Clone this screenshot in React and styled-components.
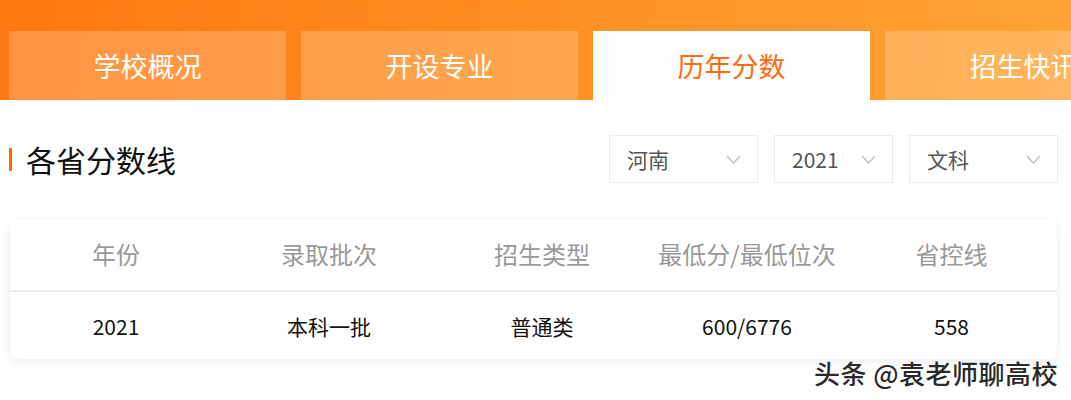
import React from 'react';
import styled, { createGlobalStyle } from 'styled-components';

const GlobalStyle = createGlobalStyle`
    body {
        margin: 0;
        background: #fff;
        font-family: "Noto Sans CJK SC", "Noto Sans", sans-serif;
    }
`;

const Page = styled.div`
    width: 1071px;
    height: 400px;
    overflow: hidden;
    background: #fff;
`;

const Header = styled.div`
    height: 100px;
    box-sizing: border-box;
    padding: 31px 0 0 9px;
    display: flex;
    gap: 15px;
    background: linear-gradient(100deg, #ff7812 0%, #ff8f22 50%, #ffa436 100%);
    overflow: hidden;
`;

const Tab = styled.div`
    flex: 0 0 277px;
    height: 69px;
    display: flex;
    align-items: center;
    justify-content: center;
    font-size: 27px;
    white-space: nowrap;
    color: ${p => (p.active ? '#ff6a10' : '#fff')};
    background: ${p => (p.active ? '#fff' : 'rgba(255,255,255,0.2)')};
`;

const TitleRow = styled.div`
    display: flex;
    align-items: center;
    justify-content: space-between;
    padding: 35px 13px 0 9px;
    height: 48px;
`;

const Title = styled.div`
    display: flex;
    align-items: center;
    gap: 14px;
    font-size: 30px;
    color: #111;
`;

const Bar = styled.span`
    width: 3px;
    height: 23px;
    background: #ff6a10;
`;

const Selects = styled.div`
    display: flex;
    gap: 16px;
`;

const Select = styled.div`
    width: ${p => p.w}px;
    height: 48px;
    box-sizing: border-box;
    border: 1px solid #ebebeb;
    display: flex;
    align-items: center;
    justify-content: space-between;
    padding: 0 16px 0 17px;
    font-size: 21px;
    color: #555;
`;

const Card = styled.div`
    margin: 37px 14px 0 10px;
    background: #fff;
    border-radius: 8px;
    box-shadow: 0 2px 12px rgba(0,0,0,0.08);
`;

const Row = styled.div`
    display: grid;
    grid-template-columns: 212px 214px 212px 198px 1fr;
    align-items: center;
    height: ${p => (p.head ? 70 : 67)}px;
    border-bottom: ${p => (p.head ? '2px solid #ececec' : 'none')};
`;

const Cell = styled.div`
    text-align: center;
    font-size: ${p => (p.head ? 24 : 21)}px;
    color: ${p => (p.head ? '#999' : '#111')};
    margin-top: ${p => (p.head ? -3 : 0)}px;
`;

const Watermark = styled.div`
    text-align: right;
    padding: 0 13px 0 0;
    margin-top: -5px;
    font-size: 26px;
    font-weight: 500;
    color: #2a2a2a;
    letter-spacing: 0.5px;
    text-shadow: 0 0 2px #fff, 0 0 2px #fff;
`;

const Chevron = () => (
    <svg width="15" height="9" viewBox="0 0 15 9">
        <path d="M1 1 L7.5 8 L14 1" fill="none" stroke="#bdbdbd" strokeWidth="1.3" />
    </svg>
);

const tabs = ['学校概况', '开设专业', '历年分数', '招生快讯'];
const heads = ['年份', '录取批次', '招生类型', '最低分/最低位次', '省控线'];
const values = ['2021', '本科一批', '普通类', '600/6776', '558'];

const App = () => (
    <Page>
        <GlobalStyle />
        <Header>
            {tabs.map((t, i) => (
                <Tab key={t} active={i === 2}>{t}</Tab>
            ))}
        </Header>
        <TitleRow>
            <Title>
                <Bar />
                各省分数线
            </Title>
            <Selects>
                <Select w={149}>河南<Chevron /></Select>
                <Select w={119}>2021<Chevron /></Select>
                <Select w={149}>文科<Chevron /></Select>
            </Selects>
        </TitleRow>
        <Card>
            <Row head>
                {heads.map(h => <Cell key={h} head>{h}</Cell>)}
            </Row>
            <Row>
                {values.map(v => <Cell key={v}>{v}</Cell>)}
            </Row>
        </Card>
        <Watermark>头条 @袁老师聊高校</Watermark>
    </Page>
);

export default App;
